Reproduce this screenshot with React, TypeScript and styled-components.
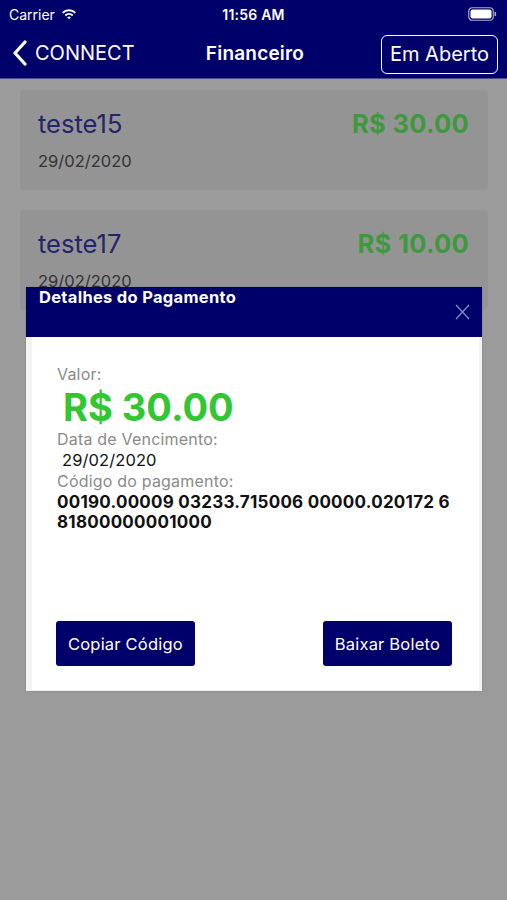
import React from "react";
import styled, { createGlobalStyle } from "styled-components";

const Global = createGlobalStyle`
  html, body { margin: 0; padding: 0; }
  body { background: #9b9b9b; font-family: Inter, "Liberation Sans", Arial, sans-serif; }
  * { box-sizing: border-box; }
`;

const NAVY = "#00006a";

const Screen = styled.div`
  position: relative;
  width: 507px;
  height: 900px;
  background: #9b9b9b;
  overflow: hidden;
`;

const Header = styled.header`
  background: ${NAVY};
  border-bottom: 1px solid #4c4c86;
  color: #fff;
`;

const StatusBar = styled.div`
  height: 28px;
  display: grid;
  grid-template-columns: 1fr auto 1fr;
  align-items: center;
  padding: 0 9px;
  font-size: 14px;
`;

const StatusLeft = styled.div`
  display: flex;
  align-items: center;
  gap: 6px;
`;

const Time = styled.div`
  font-weight: 600;
  font-size: 14px;
  letter-spacing: 0.2px;
`;

const StatusRight = styled.div`
  display: flex;
  justify-content: flex-end;
  padding-right: 1px;
`;

const NavBar = styled.div`
  height: 50px;
  display: grid;
  grid-template-columns: 1fr auto 1fr;
  align-items: center;
  padding: 0 9px 0 12px;
`;

const Back = styled.div`
  display: flex;
  align-items: center;
  gap: 7px;
  font-size: 20px;
`;

const Title = styled.div`
  font-size: 19px;
  font-weight: 600;
  letter-spacing: 0.2px;
`;

const NavButtonWrap = styled.div`
  display: flex;
  justify-content: flex-end;
`;

const NavButton = styled.button`
  background: transparent;
  border: 1px solid #fff;
  border-radius: 6px;
  color: #fff;
  font-family: inherit;
  font-size: 20px;
  height: 39px;
  padding: 0 8px;
  margin-top: 2px;
`;

const List = styled.div`
  display: flex;
  flex-direction: column;
  gap: 20px;
  padding: 11px 19px 0 20px;
`;

const Card = styled.div`
  background: #949494;
  border-radius: 4px;
  height: 100px;
  padding: 19px 19px 0 18px;
`;

const CardRow = styled.div`
  display: flex;
  justify-content: space-between;
  align-items: center;
`;

const CardName = styled.div`
  font-size: 25.5px;
  line-height: 30px;
  color: #25256a;
`;

const CardValue = styled.div`
  font-size: 25.5px;
  line-height: 30px;
  font-weight: 700;
  letter-spacing: 0.3px;
  color: #3e993e;
`;

const CardDate = styled.div`
  font-size: 16.5px;
  color: #333;
  margin-top: 12px;
`;

const Modal = styled.div`
  position: absolute;
  top: 287px;
  left: 26px;
  width: 456px;
  box-shadow: 0 0 2px rgba(0, 0, 0, 0.15);
`;

const ModalHeader = styled.div`
  height: 50px;
  background: ${NAVY};
  display: flex;
  justify-content: space-between;
  padding: 0 12px 0 13px;
`;

const ModalTitle = styled.div`
  color: #fff;
  font-size: 16.5px;
  font-weight: 700;
  letter-spacing: 0.3px;
  line-height: 21px;
`;

const Close = styled.div`
  margin-top: 17px;
`;

const ModalBody = styled.div`
  background: #fff;
  border-left: 6px solid #f4f4f4;
  border-right: 3px solid #f4f4f4;
  border-bottom: 1px solid #ececec;
  height: 354px;
  padding: 27px 18px 0 25px;
  display: flex;
  flex-direction: column;
`;

const Label = styled.div`
  font-size: 16px;
  line-height: 21px;
  letter-spacing: 0.2px;
  color: #8a8a8a;
`;

const BigValue = styled.div`
  font-size: 38px;
  line-height: 44px;
  font-weight: 700;
  color: #33c633;
  padding-left: 6px;
`;

const Text = styled.div<{ $bold?: boolean; $indent?: number }>`
  font-size: ${(p) => (p.$bold ? 17 : 16.5)}px;
  line-height: 20.5px;
  letter-spacing: ${(p) => (p.$bold ? 0.25 : 0.1)}px;
  color: #111;
  font-weight: ${(p) => (p.$bold ? 700 : 400)};
  padding-left: ${(p) => p.$indent ?? 0}px;
`;

const Actions = styled.div`
  display: flex;
  justify-content: space-between;
  margin-top: auto;
  margin-bottom: 24px;
  padding-right: 9px;
  margin-left: -1px;
`;

const ActionButton = styled.button`
  background: ${NAVY};
  color: #fff;
  border: none;
  border-radius: 3px;
  height: 45px;
  padding: 0 12px;
  font-family: inherit;
  font-size: 16.5px;
  letter-spacing: 0.2px;
`;

const Wifi = () => (
  <svg width="16" height="12" viewBox="0 0 16 12">
    <path d="M1 4.2 A10 10 0 0 1 15 4.2 L13.6 5.6 A8 8 0 0 0 2.4 5.6 Z" fill="#fff" />
    <path d="M3.6 6.8 A6.4 6.4 0 0 1 12.4 6.8 L11 8.2 A4.4 4.4 0 0 0 5 8.2 Z" fill="#fff" />
    <path d="M6.2 9.4 A2.6 2.6 0 0 1 9.8 9.4 L8 11.3 Z" fill="#fff" />
  </svg>
);

const Battery = () => (
  <svg width="29" height="14" viewBox="0 0 29 14">
    <rect x="0.75" y="0.75" width="24.5" height="12.5" rx="3.5" fill="none" stroke="#aaaacc" strokeWidth="1.2" />
    <rect x="2.5" y="2.5" width="21" height="9" rx="2" fill="#fff" />
    <rect x="26.5" y="4.8" width="1.6" height="4.4" rx="0.8" fill="#aaaacc" />
  </svg>
);

const Chevron = () => (
  <svg width="16" height="26" viewBox="0 0 16 26">
    <path d="M13 2 L3 13 L13 24" fill="none" stroke="#fff" strokeWidth="3.2" strokeLinecap="round" strokeLinejoin="round" />
  </svg>
);

const CloseIcon = () => (
  <svg width="15" height="16" viewBox="0 0 15 16">
    <path d="M1 1 L14 15 M14 1 L1 15" stroke="#8a8ac0" strokeWidth="1.3" />
  </svg>
);

const items = [
  { name: "teste15", value: "R$ 30.00", date: "29/02/2020" },
  { name: "teste17", value: "R$ 10.00", date: "29/02/2020" },
];

export default function App() {
  return (
    <Screen>
      <Global />
      <Header>
        <StatusBar>
          <StatusLeft>
            <span>Carrier</span>
            <Wifi />
          </StatusLeft>
          <Time>11:56 AM</Time>
          <StatusRight>
            <Battery />
          </StatusRight>
        </StatusBar>
        <NavBar>
          <Back>
            <Chevron />
            <span>CONNECT</span>
          </Back>
          <Title>Financeiro</Title>
          <NavButtonWrap>
            <NavButton>Em Aberto</NavButton>
          </NavButtonWrap>
        </NavBar>
      </Header>
      <List>
        {items.map((it) => (
          <Card key={it.name}>
            <CardRow>
              <CardName>{it.name}</CardName>
              <CardValue>{it.value}</CardValue>
            </CardRow>
            <CardDate>{it.date}</CardDate>
          </Card>
        ))}
      </List>
      <Modal>
        <ModalHeader>
          <ModalTitle>Detalhes do Pagamento</ModalTitle>
          <Close>
            <CloseIcon />
          </Close>
        </ModalHeader>
        <ModalBody>
          <Label>Valor:</Label>
          <BigValue>R$ 30.00</BigValue>
          <Label>Data de Vencimento:</Label>
          <Text $indent={5}>29/02/2020</Text>
          <Label>Código do pagamento:</Label>
          <Text $bold>00190.00009 03233.715006 00000.020172 6 81800000001000</Text>
          <Actions>
            <ActionButton>Copiar Código</ActionButton>
            <ActionButton>Baixar Boleto</ActionButton>
          </Actions>
        </ModalBody>
      </Modal>
    </Screen>
  );
}
